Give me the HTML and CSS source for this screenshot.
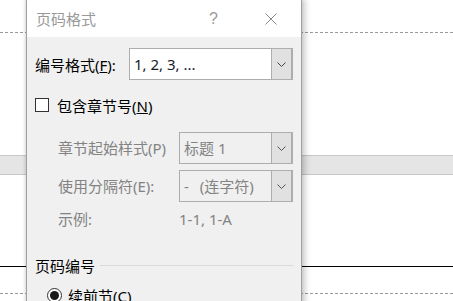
FILE: index.html
```html
<!DOCTYPE html>
<html lang="zh-CN">
<head>
  <meta charset="UTF-8">
  <title>页码格式</title>
  <link rel="stylesheet" href="styles.css">
</head>
<body>
  <div class="doc">
    <div class="rule-dash top"></div>
    <div class="band"></div>
    <div class="rule-solid"></div>
    <div class="rule-dash bottom"></div>
  </div>

  <div class="dialog">
    <div class="titlebar">
      <span class="title">页码格式</span>
      <span class="help">?</span>
      <span class="close">
        <svg width="12" height="12" viewBox="0 0 12 12"><path d="M0.5 0.5 L11.5 11.5 M11.5 0.5 L0.5 11.5" stroke="#8a8a8a" stroke-width="1" fill="none"/></svg>
      </span>
    </div>

    <div class="content">
      <div class="row first">
        <label class="label-main">编号格式(<u>F</u>):</label>
        <div class="select wide">
          <span class="value">1, 2, 3, ...</span>
          <span class="arrow"><svg width="9" height="5" viewBox="0 0 9 5"><path d="M0.5 0.5 L4.5 4.5 L8.5 0.5" stroke="#444" fill="none"/></svg></span>
        </div>
      </div>

      <div class="row check-row">
        <span class="checkbox"></span>
        <span>包含章节号(<u>N</u>)</span>
      </div>

      <div class="sub">
        <div class="row sub-row">
          <label class="label-sub">章节起始样式(P)</label>
          <div class="select narrow disabled">
            <span class="value">标题 1</span>
            <span class="arrow"><svg width="9" height="5" viewBox="0 0 9 5"><path d="M0.5 0.5 L4.5 4.5 L8.5 0.5" stroke="#555" fill="none"/></svg></span>
          </div>
        </div>
        <div class="row sub-row second">
          <label class="label-sub">使用分隔符(E):</label>
          <div class="select narrow disabled">
            <span class="value">-<span class="gap">(连字符)</span></span>
            <span class="arrow"><svg width="9" height="5" viewBox="0 0 9 5"><path d="M0.5 0.5 L4.5 4.5 L8.5 0.5" stroke="#555" fill="none"/></svg></span>
          </div>
        </div>
        <div class="row example">
          <span class="label-sub">示例:</span>
          <span class="example-value">1-1, 1-A</span>
        </div>
      </div>

      <div class="group">
        <span>页码编号</span>
        <span class="group-line"></span>
      </div>

      <div class="row radio-row">
        <span class="radio"></span>
        <span>续前节(<u>C</u>)</span>
      </div>
    </div>
  </div>
</body>
</html>
```

FILE: styles.css
```css
html, body {
  margin: 0;
  height: 301px;
  overflow: hidden;
}
body {
  background: #fff;
  font-family: "Noto Sans", "Noto Sans CJK SC", sans-serif;
  font-size: 15px;
  color: #000;
  position: relative;
}

/* document behind the dialog */
.doc {
  display: flex;
  flex-direction: column;
}
.rule-dash {
  height: 1px;
  background: repeating-linear-gradient(to right, #9a9a9a 0 3px, transparent 3px 5px);
}
.rule-dash.top {
  margin-top: 32px;
}
.band {
  margin-top: 122px;
  height: 18px;
  background: #e5e5e5;
  border-top: 1px solid #c8c8c8;
  border-bottom: 1px solid #c8c8c8;
}
.rule-solid {
  margin-top: 91px;
  height: 1px;
  background: #000;
}
.rule-dash.bottom {
  margin-top: 26px;
}

/* dialog window */
.dialog {
  position: absolute;
  left: 26px;
  top: -1px;
  width: 274px;
  height: 320px;
  border: 1px solid #a0a0a0;
  background: #f0f0f0;
  box-shadow: 3px 0 6px rgba(0,0,0,0.22), -1px 0 3px rgba(0,0,0,0.12);
}
.titlebar {
  height: 37px;
  background: #fff;
  display: flex;
  align-items: center;
  padding-left: 9px;
}
.title {
  color: #999;
  line-height: 20px;
}
.help {
  margin-left: auto;
  color: #999;
  font-family: "Liberation Sans", sans-serif;
  font-size: 16px;
  line-height: 20px;
}
.close {
  display: flex;
  margin-left: 47px;
  margin-right: 24px;
}

.content {
  padding: 0 7px 0 8px;
}
.row {
  display: flex;
  align-items: center;
}
.row.first {
  margin-top: 11px;
}
.label-main {
  width: 94px;
}
.select {
  height: 30px;
  border: 1px solid #adadad;
  background: #fff;
  display: flex;
  align-items: center;
}
.select .value {
  flex: 1;
  padding-left: 4px;
  line-height: 20px;
  color: #1a1a2a;
}
.select .value .gap {
  margin-left: 11px;
}
.select .arrow {
  width: 19px;
  height: 100%;
  background: #e1e1e1;
  border-left: 1px solid #adadad;
  border-right: 1px solid #adadad;
  display: flex;
  align-items: center;
  justify-content: center;
}
.select.wide {
  width: 162px;
}
.select.narrow {
  width: 112px;
}
.select.disabled {
  background: #f0f0f0;
}
.select.disabled .value {
  color: #838383;
}

.check-row {
  margin-top: 15px;
  height: 20px;
}
.checkbox {
  width: 12px;
  height: 12px;
  border: 1px solid #333;
  background: #fff;
  margin-right: 8px;
}

.sub {
  padding-left: 23px;
  color: #838383;
}
.sub-row {
  margin-top: 17px;
}
.sub-row.second {
  margin-top: 6px;
}
.label-sub {
  width: 121px;
  line-height: 20px;
}
.example {
  margin-top: 7px;
  height: 20px;
}
.example-value {
  line-height: 20px;
}

.group {
  margin-top: 26px;
  height: 20px;
  display: flex;
  align-items: center;
}
.group-line {
  flex: 1;
  height: 1px;
  background: #dadada;
  margin-left: 5px;
}

.radio-row {
  margin-top: 10px;
  height: 20px;
  padding-left: 12px;
}
.radio {
  width: 13px;
  height: 13px;
  border: 1px solid #333;
  border-radius: 50%;
  background: #fff;
  margin-right: 6px;
  display: flex;
  align-items: center;
  justify-content: center;
}
.radio::after {
  content: "";
  width: 9px;
  height: 9px;
  border-radius: 50%;
  background: #1a1a1a;
}
```
